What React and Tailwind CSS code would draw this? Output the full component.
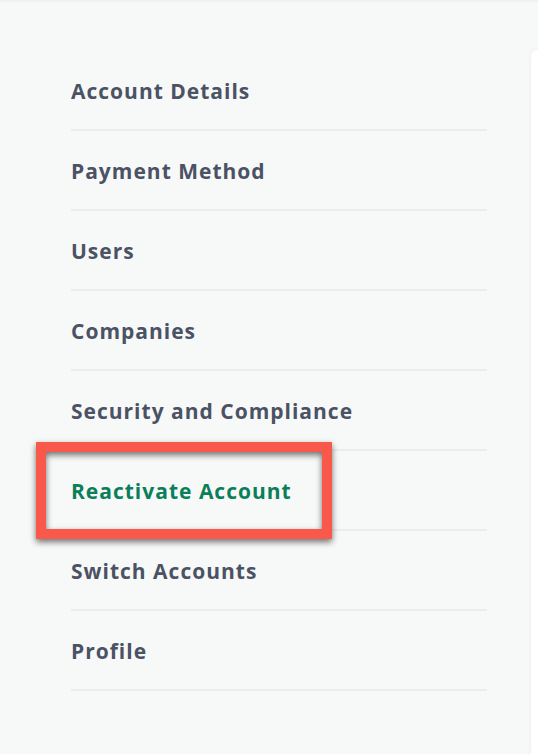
const items = [
  "Account Details",
  "Payment Method",
  "Users",
  "Companies",
  "Security and Compliance",
  "Reactivate Account",
  "Switch Accounts",
  "Profile",
];

export default function App() {
  return (
    <div
      className="h-[754px] w-[538px] overflow-hidden bg-[#f7f8f8] border-t-2 border-[#f0f1f1] flex"
      style={{ fontFamily: "'Open Sans', Lato, sans-serif" }}
    >
      <nav className="w-[487px] shrink-0 pl-[71px] pt-[49px]">
        {items.map((label) => {
          const active = label === "Reactivate Account";
          return (
            <div
              key={label}
              className="relative h-[80px] pt-[4px] flex items-center border-b-2 border-[#ebeded]"
            >
              <span
                className={
                  "text-[21px] font-bold tracking-[1px] " +
                  (active ? "text-[#0a7f59]" : "text-[#4a5264]")
                }
              >
                {label}
              </span>
              {active && (
                <div className="absolute left-[-35px] top-[-9px] w-[296px] h-[97px] border-[10px] border-[#f9594b] drop-shadow-[0_3px_3px_rgba(0,0,0,0.55)]" />
              )}
            </div>
          );
        })}
      </nav>
      <div className="ml-[44px] mt-[48px] flex-1 bg-white rounded-tl-[6px] shadow-[0_0_4px_rgba(0,0,0,0.06)]" />
    </div>
  );
}
